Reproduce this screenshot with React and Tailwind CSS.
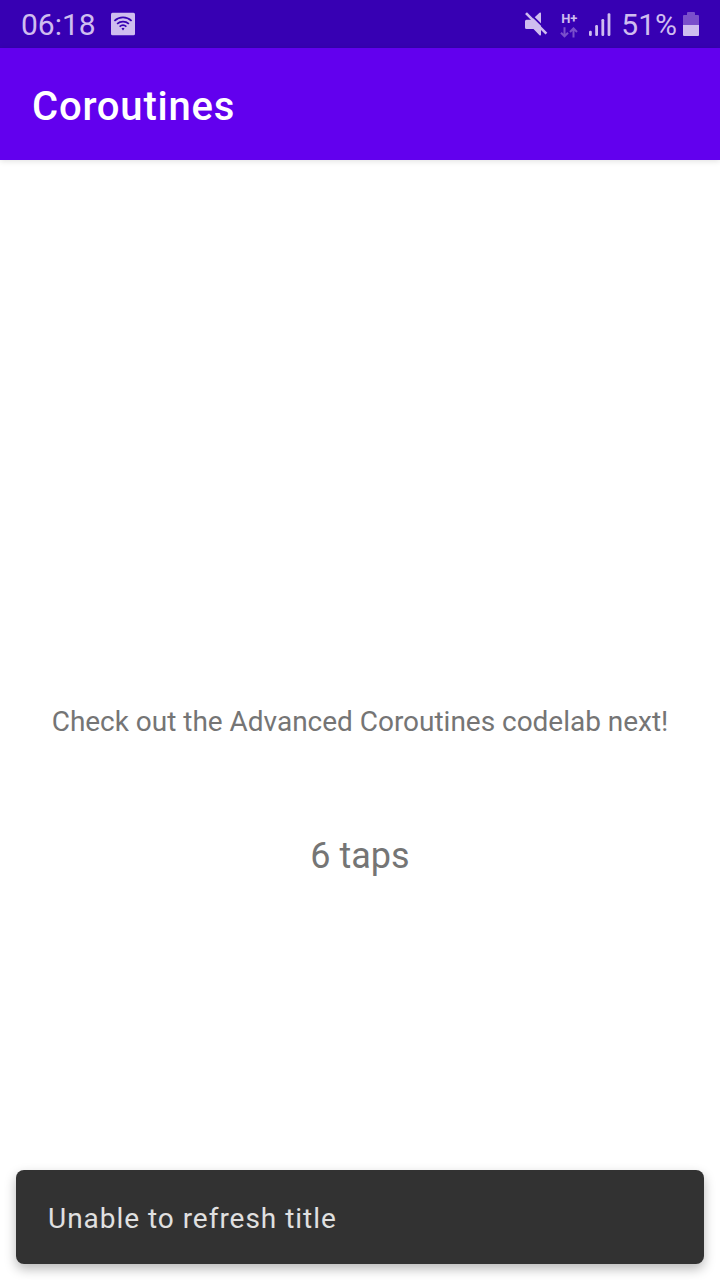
function HotspotIcon() {
  return (
    <svg className="ml-[15px] h-6 w-6 shrink-0" viewBox="0 0 24 24" fill="none">
      <rect x="0" y="0.7" width="24" height="22.5" rx="1.5" fill="#cfbdef" />
      <g stroke="#3700b3" strokeWidth="1.7">
        <path d="M3.4 8.9C8.4 4.3 15.6 4.3 20.6 8.9" />
        <path d="M6.1 11.9C9.5 8.9 14.5 8.9 17.9 11.9" />
        <path d="M8.6 14.7C10.6 12.9 13.4 12.9 15.4 14.7" />
      </g>
      <path d="M10.5 16.4A2.2 2.2 0 0 1 13.5 16.4L12 18.6Z" fill="#3700b3" />
    </svg>
  );
}

function MuteIcon() {
  return (
    <svg className="h-6 w-6 shrink-0" viewBox="0 0 24 24">
      <path d="M2.5 7.8H8L15.5 0.8Q17 -0.3 17 1.5V22.5Q17 24.3 15.5 23.2L9.5 17H2.5Q1 17 1 15.5V9.3Q1 7.8 2.5 7.8Z" fill="#cfbdef" />
      <path d="M3.8 -0.4L25 20.4" stroke="#3700b3" strokeWidth="1.8" />
      <path d="M2 1.2L22.4 21.6" stroke="#cfbdef" strokeWidth="2.6" />
    </svg>
  );
}

function DataArrows() {
  return (
    <svg className="h-[11px] w-[18px]" viewBox="0 0 18 11" fill="none" stroke="#7a4fcb" strokeWidth="2">
      <path d="M4.5 0.3V9.3M1 5.8L4.5 9.4L8 5.8" />
      <path d="M13.5 10.5V1.5M10 5L13.5 1.4L17 5" />
    </svg>
  );
}

function SignalIcon() {
  return (
    <svg className="ml-[11px] h-6 w-[22px] shrink-0" viewBox="0 0 22 24" fill="#cfbdef">
      <rect x="0" y="18.7" width="2.8" height="5.3" rx="1.2" />
      <rect x="6.2" y="13" width="2.8" height="11" rx="1.2" />
      <rect x="12.4" y="7" width="2.8" height="17" rx="1.2" />
      <rect x="18.6" y="1.3" width="2.8" height="22.7" rx="1.2" />
    </svg>
  );
}

function BatteryIcon() {
  return (
    <svg className="ml-[6px] h-6 w-4 shrink-0" viewBox="0 0 16 24">
      <path d="M4 1Q4 0 5 0H11Q12 0 12 1V3H15Q16 3 16 4V13H0V4Q0 3 1 3H4Z" fill="#7a4fcb" />
      <path d="M0 13H16V23Q16 24 15 24H1Q0 24 0 23Z" fill="#cfbdef" />
    </svg>
  );
}

export default function App() {
  return (
    <div className="flex h-[1280px] w-[720px] flex-col overflow-hidden bg-white font-['Roboto',sans-serif]">
      <div className="flex h-12 shrink-0 items-center bg-[#3700b3] pr-[21px] pl-[21px] text-[#cfbdef]">
        <span className="pt-[2px] text-[30px] leading-[46px]">06:18</span>
        <HotspotIcon />
        <div className="ml-auto flex items-center">
          <MuteIcon />
          <div className="ml-3 flex w-[18px] flex-col items-center gap-[2px] pt-[1px]">
            <span className="text-[13px] leading-[13px] font-bold">H+</span>
            <DataArrows />
          </div>
          <SignalIcon />
          <span className="ml-[10px] pt-[2px] text-[30px] leading-[46px]">51%</span>
          <BatteryIcon />
        </div>
      </div>
      <header className="flex h-28 shrink-0 items-center bg-[#6200ee] px-8 pt-[6px] shadow-[0_1px_6px_rgba(0,0,0,0.13)]">
        <h1 className="text-[40px] leading-[48px] font-medium tracking-[0.8px] text-white">Coroutines</h1>
      </header>
      <main className="flex grow flex-col items-center pt-[545px] text-[#757575]">
        <p className="text-[28px] leading-[34px] tracking-[-0.02px] whitespace-nowrap">
          Check out the Advanced Coroutines codelab next!
        </p>
        <p className="mt-[96px] text-[36px] leading-[42px]">6 taps</p>
      </main>
      <div className="mx-4 mb-4 flex h-[94px] shrink-0 items-center rounded-lg bg-[#323232] px-8 pt-[4px] shadow-[0_5px_12px_rgba(0,0,0,0.28)]">
        <span className="text-[28px] leading-[34px] tracking-[0.97px] text-[#e0e0e0]">Unable to refresh title</span>
      </div>
    </div>
  );
}
